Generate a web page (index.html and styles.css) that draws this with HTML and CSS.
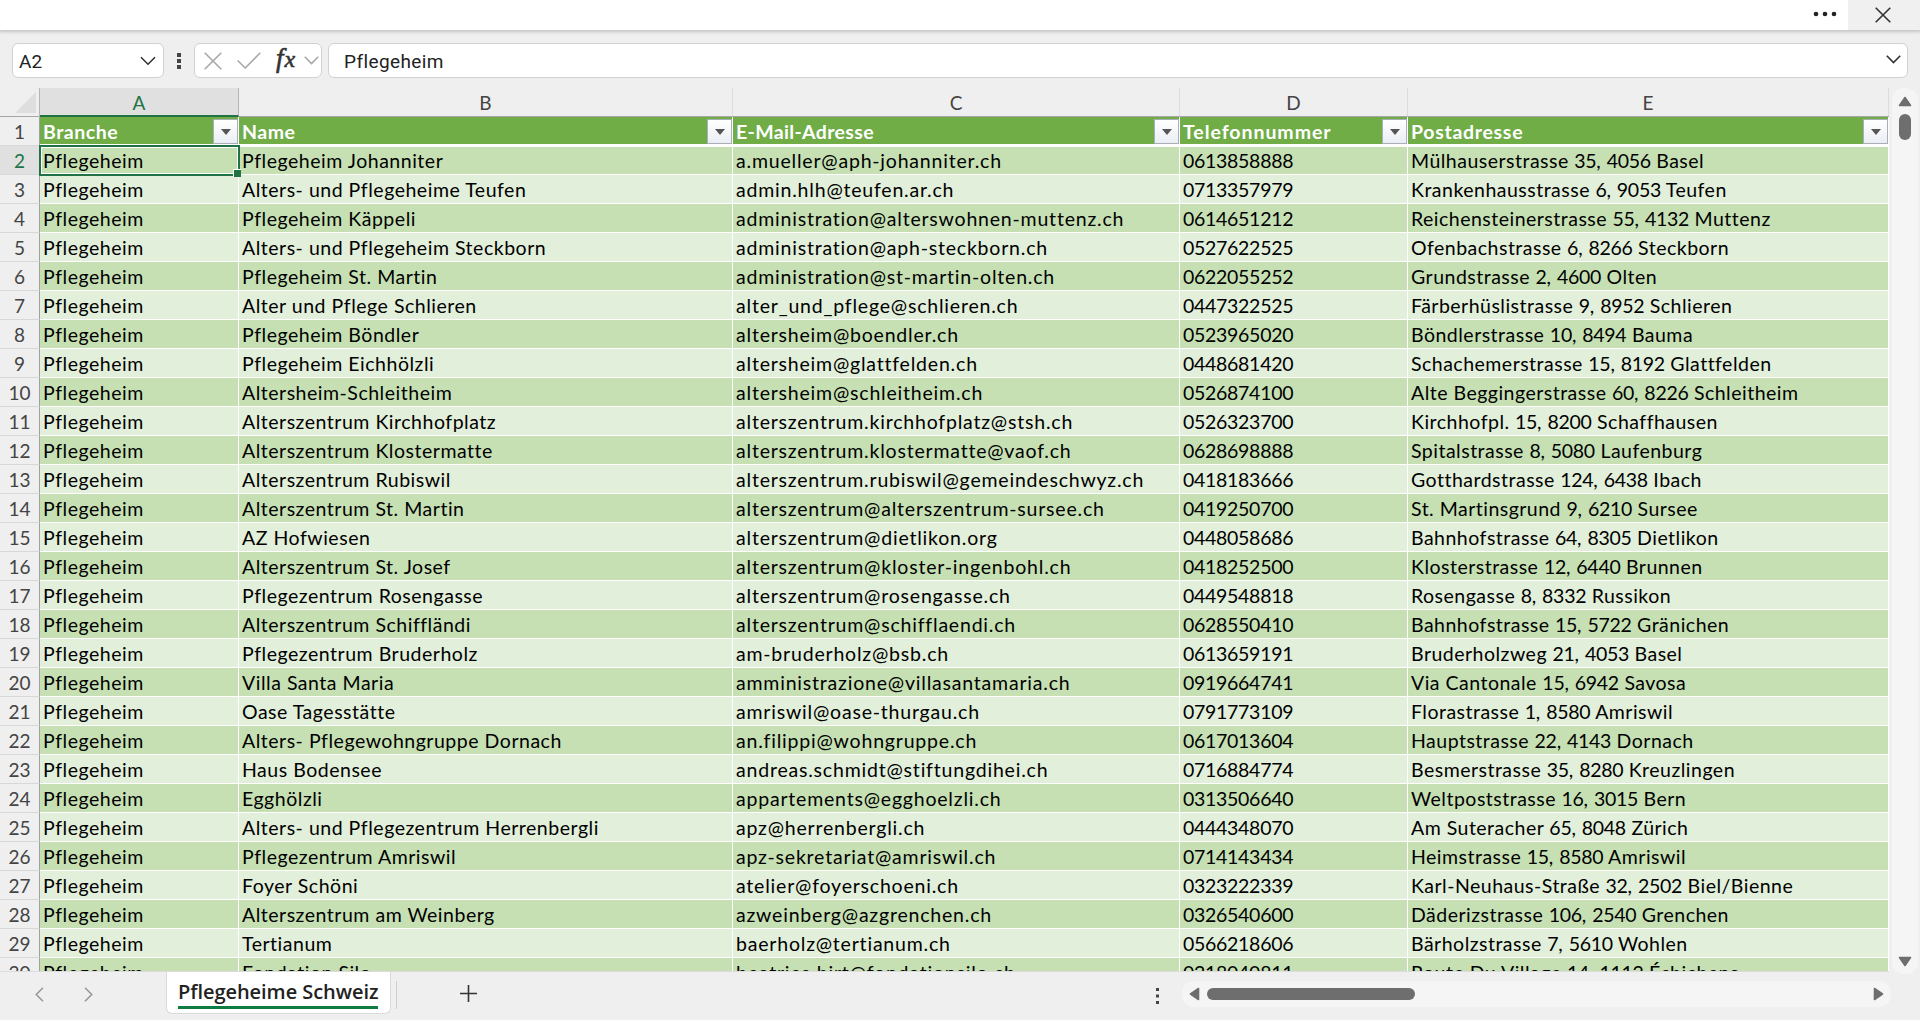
FILE: index.html
```
<!DOCTYPE html>
<html lang="de">
<head>
    <meta charset="UTF-8">
    <title>Pflegeheime Schweiz</title>
    <link rel="stylesheet" href="styles.css">
</head>
<body>
    <div class="titlebar">
        <svg class="more" width="24" height="6" viewBox="0 0 24 6"><circle cx="3" cy="3" r="2.3"/><circle cx="12" cy="3" r="2.3"/><circle cx="21" cy="3" r="2.3"/></svg>
        <div class="close">
            <svg width="16" height="16" viewBox="0 0 16 16"><path d="M.7.7l14.6 14.6M15.3.7L.7 15.3"/></svg>
        </div>
    </div>

    <div class="formula-bar">
        <div class="box name-box">
            <span>A2</span>
            <svg width="16" height="10" viewBox="0 0 16 10"><path d="M1 1.2l7 7 7-7"/></svg>
        </div>
        <svg class="grip" width="4" height="16" viewBox="0 0 4 16"><path d="M0 0h4v4H0zM0 6h4v4H0zM0 12h4v4H0z"/></svg>
        <div class="box fx-box">
            <svg width="18" height="18" viewBox="0 0 18 18"><path d="M.7.7l16.6 16.6M17.3.7L.7 17.3"/></svg>
            <svg class="accept" width="24" height="17" viewBox="0 0 24 17"><path d="M.7 8.5l7.5 7.5L23.3.8"/></svg>
            <span class="fx"><i>f</i><i class="x">x</i></span>
            <svg width="15" height="9" viewBox="0 0 15 9"><path d="M.8.8l6.7 6.7L14.2.8"/></svg>
        </div>
        <div class="box formula">
            <span>Pflegeheim</span>
            <svg width="15" height="9" viewBox="0 0 15 9"><path d="M.8.8l6.7 6.7L14.2.8"/></svg>
        </div>
    </div>

    <div class="main">
        <div class="sheet">
            <div class="row letters">
                <div class="corner"><svg width="21" height="21" viewBox="0 0 21 21"><path d="M21 0v21H0z"/></svg></div>
                <div class="letter active">A</div>
                <div class="letter">B</div>
                <div class="letter">C</div>
                <div class="letter">D</div>
                <div class="letter">E</div>
            </div>
            <div id="rows"></div>
        </div>
        <div class="vscroll">
            <svg width="14" height="11" viewBox="0 0 14 11"><path d="M7 1.5l5.5 8h-11z"/></svg>
            <div class="vthumb"></div>
            <svg class="down" width="14" height="11" viewBox="0 0 14 11"><path d="M7 9.5l5.5-8h-11z"/></svg>
        </div>
    </div>

    <div class="footer">
        <div class="nav">
            <svg width="9" height="15" viewBox="0 0 9 15"><path d="M8 .8L1.3 7.5 8 14.2"/></svg>
            <svg width="9" height="15" viewBox="0 0 9 15"><path d="M1 .8l6.7 6.7L1 14.2"/></svg>
        </div>
        <div class="tab"><span>Pflegeheime Schweiz</span></div>
        <div class="divider"></div>
        <svg class="plus" width="17" height="17" viewBox="0 0 17 17"><path d="M8.5 0v17M0 8.5h17"/></svg>
        <svg class="split" width="3" height="16" viewBox="0 0 3 16"><path d="M0 0h3v3H0zM0 6.500h3v3H0zM0 13h3v3H0z"/></svg>
        <div class="hscroll">
            <svg width="11" height="14" viewBox="0 0 11 14"><path d="M1.500 7l8-5.500v11z"/></svg>
            <div class="hthumb"></div>
            <svg class="right" width="11" height="14" viewBox="0 0 11 14"><path d="M9.500 7l-8-5.500v11z"/></svg>
        </div>
    </div>

    <script src="sheet.js"></script>
</body>
</html>
```
FILE: styles.css
```
* {
    box-sizing: border-box;
}
body {
    margin: 0;
    width: 1920px;
    height: 1020px;
    overflow: hidden;
    display: flex;
    flex-direction: column;
    background: #efefef;
    font-family: Lato, "Liberation Sans", sans-serif;
    font-size: 19px;
    font-variant-ligatures: none;
    color: #000;
}
svg {
    display: block;
    flex: none;
    fill: none;
    stroke: #333;
    stroke-width: 1.6;
}

/* title bar */
.titlebar {
    flex: none;
    height: 30px;
    display: flex;
    justify-content: flex-end;
    background: #fff;
    box-shadow: 0 1px 3px 1px #c4c4c4;
}
.more {
    margin: 11px 11px 0 0;
    fill: #222;
    stroke: none;
}
.close {
    width: 72px;
    padding: 7px 0 0 27px;
    background: #f0f0f0;
}

/* formula bar */
.formula-bar {
    flex: none;
    height: 58px;
    padding: 13px 12px 0;
    display: flex;
    font-family: Roboto, sans-serif;
    color: #222;
}
.box {
    height: 35px;
    display: flex;
    align-items: center;
    background: #fff;
    border: 1px solid #d1d1d1;
    border-radius: 6px;
}
.name-box {
    width: 152px;
    padding: 1px 7px 0 6px;
    justify-content: space-between;
}
.grip {
    margin: 10px 13px 0 13px;
    fill: #444;
    stroke: none;
}
.fx-box {
    width: 128px;
    padding: 0 2px 0 9px;
}
.fx-box svg {
    stroke: #a8a8a8;
}
.accept {
    margin-left: 15px;
}
.fx {
    width: 24px;
    margin: -4px 6px 0 15px;
    font: italic 27px/30px "Liberation Serif", serif;
    letter-spacing: 1px;
    color: #333;
    -webkit-text-stroke: 0.6px #333;
    white-space: nowrap;
}
.fx .x {
    font-size: 24px;
}
.formula {
    flex: 1;
    margin-left: 6px;
    padding: 1px 6px 0 15px;
    justify-content: space-between;
    letter-spacing: 0.4px;
}
.formula svg {
    margin-top: -4px;
}

/* grid */
.main {
    flex: none;
    height: 884px;
    display: flex;
}
.sheet {
    width: 1889px;
    overflow: hidden;
    border-bottom: 1px solid #dcdcdc;
}
.row {
    display: grid;
    grid-template-columns: 40px 199px 494px 447px 228px 481px;
    grid-template-rows: 29px;
    height: 29px;
    line-height: 29px;
    white-space: nowrap;
}
.letters {
    grid-template-rows: 28px;
    border-bottom: 1px solid #a6a6a6;
    color: #444;
    text-align: center;
}
.corner {
    padding: 4px 0 0 15px;
}
.corner svg {
    fill: #dedede;
    stroke: none;
}
.letter {
    height: 28px;
    line-height: 30px;
    border-right: 1px solid #dcdcdc;
}
.letter.active {
    height: 29px;
    background: #e0e0e0;
    border-right-color: #b5b5b5;
    border-bottom: 2px solid #217346;
    box-shadow: -1px 0 #b5b5b5;
    color: #217346;
}
.num {
    border-right: 1px solid #a0a0a0;
    border-bottom: 1px solid #d8d8d8;
    text-align: center;
    color: #444;
    line-height: 30px;
}
.num.active {
    background: #e0e0e0;
    color: #217346;
}
.cell {
    position: relative;
    padding-left: 3px;
    font-size: 19.5px;
    line-height: 30px;
    border-right: 1px solid #fff;
    border-bottom: 1px solid #fff;
    background: #e2efda;
    letter-spacing: 0.52px;
}
.row:nth-child(even) .cell {
    background: #c6e0b4;
}
.row.head .cell {
    display: flex;
    justify-content: space-between;
    border-bottom-width: 2px;
    background: #70ad47;
    color: #fff;
    font-weight: bold;
}
.row.head + .row .cell {
    border-top: 1px solid #fff;
    line-height: 28px;
}
.filter {
    width: 25px;
    height: 25px;
    margin-top: 2px;
    padding: 9px 0 0 7px;
    background: linear-gradient(#fff, #eaeef4);
    border: 1px solid #a9afb8;
}
.filter svg {
    fill: #555;
    stroke: none;
}
.cell.mail {
    letter-spacing: 0.8px;
}
.cell.address {
    letter-spacing: 0.49px;
}
.cell.phone,
.cell .digits {
    letter-spacing: -0.29px;
}
.head .cell.mail {
    letter-spacing: 0.35px;
}
.head .cell.phone {
    letter-spacing: 0.95px;
}
.head .cell.address {
    letter-spacing: 0.7px;
}
.selection {
    position: absolute;
    z-index: 1;
    left: -1px;
    top: -2px;
    width: 201px;
    height: 31px;
    border: 2px solid #217346;
    box-shadow: inset 0 0 0 1px #fff;
}
.selection::after {
    content: "";
    position: absolute;
    right: -3px;
    bottom: -3px;
    width: 7px;
    height: 7px;
    background: #217346;
    border: solid #fff;
    border-width: 1px 0 0 1px;
}

/* scroll bars */
.vscroll {
    width: 26px;
    height: 886px;
    margin-left: 3px;
    padding: 8px 0 7px;
    display: flex;
    flex-direction: column;
    align-items: center;
    background: #f5f5f5;
    border-radius: 12px;
}
.vscroll svg,
.hscroll svg {
    fill: #6e6e6e;
    stroke: #6e6e6e;
    stroke-linejoin: round;
}
.vthumb {
    width: 12px;
    height: 26px;
    margin-top: 7px;
    border-radius: 6px;
    background: #6e6e6e;
}
.vscroll .down {
    margin-top: auto;
}

/* footer */
.footer {
    flex: 1;
    display: flex;
    align-items: flex-start;
}
.nav {
    width: 166px;
    padding: 15px 0 0 35px;
    display: flex;
    gap: 40px;
}
.nav svg {
    stroke: #999;
}
.tab {
    width: 225px;
    height: 42px;
    padding: 5px 0 0 11px;
    background: #fff;
    border: 1px solid #dadada;
    border-top: 0;
    border-radius: 0 0 6px 6px;
    font: 600 20px/29px "Open Sans", sans-serif;
    font-variant-ligatures: none;
    letter-spacing: -0.05px;
    color: #222;
    white-space: nowrap;
}
.tab span {
    display: block;
    width: 200px;
    height: 32px;
    border-bottom: 3px solid #107c41;
}
.divider {
    width: 1px;
    height: 28px;
    margin: 9px 0 0 5px;
    background: #cfcfcf;
}
.plus {
    margin: 13px 0 0 63px;
}
.split {
    margin: 16px 0 0 679px;
    fill: #444;
    stroke: none;
}
.hscroll {
    width: 709px;
    height: 26px;
    margin: 9px 0 0 23px;
    padding: 0 7px;
    display: flex;
    align-items: center;
    background: #f5f5f5;
    border-radius: 12px;
}
.hthumb {
    width: 208px;
    height: 12px;
    margin-left: 7px;
    border-radius: 6px;
    background: #6e6e6e;
}
.right {
    margin-left: auto;
}
```
FILE: sheet.js
```
const header = ['Branche', 'Name', 'E-Mail-Adresse', 'Telefonnummer', 'Postadresse'];

const homes = [
    ['Pflegeheim Johanniter', 'a.mueller@aph-johanniter.ch', '0613858888', 'Mülhauserstrasse 35, 4056 Basel'],
    ['Alters- und Pflegeheime Teufen', 'admin.hlh@teufen.ar.ch', '0713357979', 'Krankenhausstrasse 6, 9053 Teufen'],
    ['Pflegeheim Käppeli', 'administration@alterswohnen-muttenz.ch', '0614651212', 'Reichensteinerstrasse 55, 4132 Muttenz'],
    ['Alters- und Pflegeheim Steckborn', 'administration@aph-steckborn.ch', '0527622525', 'Ofenbachstrasse 6, 8266 Steckborn'],
    ['Pflegeheim St. Martin', 'administration@st-martin-olten.ch', '0622055252', 'Grundstrasse 2, 4600 Olten'],
    ['Alter und Pflege Schlieren', 'alter_und_pflege@schlieren.ch', '0447322525', 'Färberhüslistrasse 9, 8952 Schlieren'],
    ['Pflegeheim Böndler', 'altersheim@boendler.ch', '0523965020', 'Böndlerstrasse 10, 8494 Bauma'],
    ['Pflegeheim Eichhölzli', 'altersheim@glattfelden.ch', '0448681420', 'Schachemerstrasse 15, 8192 Glattfelden'],
    ['Altersheim-Schleitheim', 'altersheim@schleitheim.ch', '0526874100', 'Alte Beggingerstrasse 60, 8226 Schleitheim'],
    ['Alterszentrum Kirchhofplatz', 'alterszentrum.kirchhofplatz@stsh.ch', '0526323700', 'Kirchhofpl. 15, 8200 Schaffhausen'],
    ['Alterszentrum Klostermatte', 'alterszentrum.klostermatte@vaof.ch', '0628698888', 'Spitalstrasse 8, 5080 Laufenburg'],
    ['Alterszentrum Rubiswil', 'alterszentrum.rubiswil@gemeindeschwyz.ch', '0418183666', 'Gotthardstrasse 124, 6438 Ibach'],
    ['Alterszentrum St. Martin', 'alterszentrum@alterszentrum-sursee.ch', '0419250700', 'St. Martinsgrund 9, 6210 Sursee'],
    ['AZ Hofwiesen', 'alterszentrum@dietlikon.org', '0448058686', 'Bahnhofstrasse 64, 8305 Dietlikon'],
    ['Alterszentrum St. Josef', 'alterszentrum@kloster-ingenbohl.ch', '0418252500', 'Klosterstrasse 12, 6440 Brunnen'],
    ['Pflegezentrum Rosengasse', 'alterszentrum@rosengasse.ch', '0449548818', 'Rosengasse 8, 8332 Russikon'],
    ['Alterszentrum Schiffländi', 'alterszentrum@schifflaendi.ch', '0628550410', 'Bahnhofstrasse 15, 5722 Gränichen'],
    ['Pflegezentrum Bruderholz', 'am-bruderholz@bsb.ch', '0613659191', 'Bruderholzweg 21, 4053 Basel'],
    ['Villa Santa Maria', 'amministrazione@villasantamaria.ch', '0919664741', 'Via Cantonale 15, 6942 Savosa'],
    ['Oase Tagesstätte', 'amriswil@oase-thurgau.ch', '0791773109', 'Florastrasse 1, 8580 Amriswil'],
    ['Alters- Pflegewohngruppe Dornach', 'an.filippi@wohngruppe.ch', '0617013604', 'Hauptstrasse 22, 4143 Dornach'],
    ['Haus Bodensee', 'andreas.schmidt@stiftungdihei.ch', '0716884774', 'Besmerstrasse 35, 8280 Kreuzlingen'],
    ['Egghölzli', 'appartements@egghoelzli.ch', '0313506640', 'Weltpoststrasse 16, 3015 Bern'],
    ['Alters- und Pflegezentrum Herrenbergli', 'apz@herrenbergli.ch', '0444348070', 'Am Suteracher 65, 8048 Zürich'],
    ['Pflegezentrum Amriswil', 'apz-sekretariat@amriswil.ch', '0714143434', 'Heimstrasse 15, 8580 Amriswil'],
    ['Foyer Schöni', 'atelier@foyerschoeni.ch', '0323222339', 'Karl-Neuhaus-Straße 32, 2502 Biel/Bienne'],
    ['Alterszentrum am Weinberg', 'azweinberg@azgrenchen.ch', '0326540600', 'Däderizstrasse 106, 2540 Grenchen'],
    ['Tertianum', 'baerholz@tertianum.ch', '0566218606', 'Bärholzstrasse 7, 5610 Wohlen'],
    ['Fondation Silo', 'beatrice.hirt@fondationsilo.ch', '0218040811', 'Route Du Village 14, 1112 Échichens']
];

const columns = ['branch', 'name', 'mail', 'phone', 'address'];
const arrow = '<span class="filter"><svg width="10" height="6" viewBox="0 0 10 6"><path d="M0 0h10L5 6z"/></svg></span>';

let html = '<div class="row head"><div class="num">1</div>';
header.forEach((title, c) => {
    html += `<div class="cell ${columns[c]}">${title}${arrow}</div>`;
});
html += '</div>';

homes.forEach((home, i) => {
    const selected = i === 0;
    html += `<div class="row"><div class="num${selected ? ' active' : ''}">${i + 2}</div>`;
    ['Pflegeheim', ...home].forEach((text, c) => {
        const frame = selected && c === 0 ? '<div class="selection"></div>' : '';
        // digits are set tighter than letters
        const content = text.replace(/\d+/g, '<span class="digits">$&</span>');
        html += `<div class="cell ${columns[c]}">${content}${frame}</div>`;
    });
    html += '</div>';
});

document.getElementById('rows').innerHTML = html;
```
